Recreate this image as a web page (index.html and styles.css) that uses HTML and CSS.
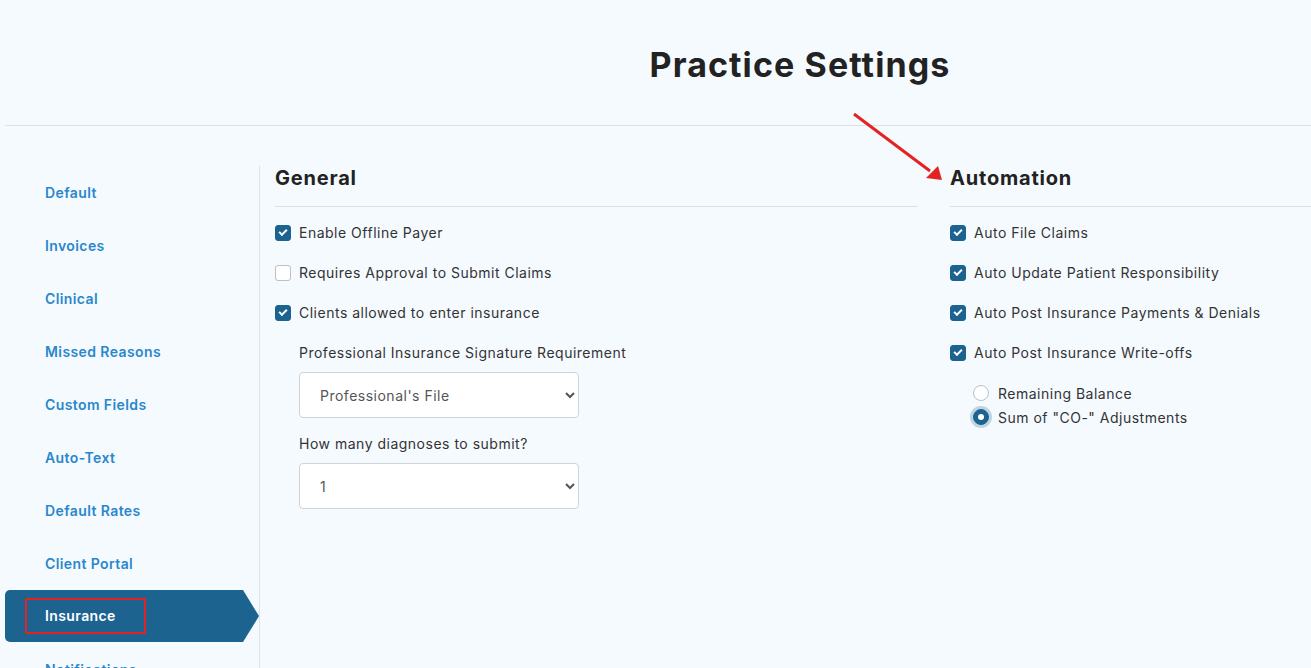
FILE: index.html
```html
<!DOCTYPE html>
<html lang="en">
<head>
  <meta charset="UTF-8">
  <meta name="viewport" content="width=device-width, initial-scale=1.0">
  <title>Practice Settings</title>
  <link rel="stylesheet" href="styles.css">
</head>
<body>
  <header class="page-header">
    <h1>Practice Settings</h1>
  </header>

  <div class="layout">
    <nav class="sidebar">
      <a href="#" class="nav-item">Default</a>
      <a href="#" class="nav-item">Invoices</a>
      <a href="#" class="nav-item">Clinical</a>
      <a href="#" class="nav-item">Missed Reasons</a>
      <a href="#" class="nav-item">Custom Fields</a>
      <a href="#" class="nav-item">Auto-Text</a>
      <a href="#" class="nav-item">Default Rates</a>
      <a href="#" class="nav-item">Client Portal</a>
      <a href="#" class="nav-item active"><span class="highlight">Insurance</span></a>
      <a href="#" class="nav-item">Notifications</a>
    </nav>

    <main class="content">
      <section class="panel">
        <h2>General</h2>
        <div class="options">
          <label class="option"><input type="checkbox" checked><span>Enable Offline Payer</span></label>
          <label class="option"><input type="checkbox"><span>Requires Approval to Submit Claims</span></label>
          <label class="option"><input type="checkbox" checked><span>Clients allowed to enter insurance</span></label>

          <div class="field">
            <label for="signature">Professional Insurance Signature Requirement</label>
            <select id="signature">
              <option>Professional's File</option>
            </select>
          </div>

          <div class="field">
            <label for="diagnoses">How many diagnoses to submit?</label>
            <select id="diagnoses">
              <option>1</option>
              <option>2</option>
              <option>3</option>
              <option>4</option>
            </select>
          </div>
        </div>
      </section>

      <section class="panel">
        <h2>Automation</h2>
        <div class="options">
          <label class="option"><input type="checkbox" checked><span>Auto File Claims</span></label>
          <label class="option"><input type="checkbox" checked><span>Auto Update Patient Responsibility</span></label>
          <label class="option"><input type="checkbox" checked><span>Auto Post Insurance Payments &amp; Denials</span></label>
          <label class="option"><input type="checkbox" checked><span>Auto Post Insurance Write-offs</span></label>

          <div class="radio-group">
            <label class="radio"><input type="radio" name="writeoff"><span>Remaining Balance</span></label>
            <label class="radio"><input type="radio" name="writeoff" checked><span>Sum of "CO-" Adjustments</span></label>
          </div>
        </div>
      </section>
    </main>
  </div>

  <!-- annotation arrow pointing at the Automation heading -->
  <svg class="annotation-arrow" width="100" height="80" viewBox="0 0 100 80">
    <line x1="4" y1="4" x2="80" y2="61" stroke="#e32222" stroke-width="3"/>
    <polygon points="92,70 76,68 88,56" fill="#e32222"/>
  </svg>
</body>
</html>
```

FILE: styles.css
```css
body {
  margin: 0;
  background: #f5faff;
  font-family: Inter, "Liberation Sans", sans-serif;
  color: #333;
  overflow: hidden;
  height: 100vh;
  position: relative;
}

.page-header {
  margin-left: 5px;
  padding: 45px 0 40px 284px;
  border-bottom: 1px solid #dde2e7;
  text-align: center;
}
.page-header h1 {
  margin: 0;
  font-size: 34px;
  line-height: 40px;
  font-weight: 700;
  letter-spacing: 1.1px;
  color: #222;
}

.layout {
  display: flex;
  margin-top: 40px;
  margin-left: 5px;
}

.sidebar {
  width: 254px;
  flex-shrink: 0;
  border-right: 1px solid #dde2e7;
  display: flex;
  flex-direction: column;
  height: 600px;
}
.nav-item {
  display: flex;
  align-items: center;
  height: 53px;
  padding-left: 40px;
  padding-bottom: 1px;
  box-sizing: border-box;
  font-size: 14px;
  font-weight: 600;
  letter-spacing: 0.4px;
  color: #2a87cc;
  text-decoration: none;
  flex-shrink: 0;
}
.nav-item.active {
  position: relative;
  height: 52px;
  margin-bottom: 1px;
  width: 238px;
  padding-left: 20px;
  padding-bottom: 0;
  background: #1d6390;
  color: #fff;
  border-radius: 5px 0 0 5px;
}
.nav-item.active::after {
  content: "";
  position: absolute;
  left: 238px;
  top: 0;
  border-top: 26px solid transparent;
  border-bottom: 26px solid transparent;
  border-left: 16px solid #1d6390;
}
.highlight {
  display: inline-block;
  width: 121px;
  height: 36px;
  box-sizing: border-box;
  border: 2px solid #e02424;
  padding-left: 18px;
  line-height: 32px;
}

.content {
  display: grid;
  grid-template-columns: 643px 643px;
  gap: 32px;
  padding-left: 15px;
}

.panel h2 {
  margin: 0;
  font-size: 20px;
  line-height: 24px;
  font-weight: 700;
  letter-spacing: 0.8px;
  color: #222;
  padding-bottom: 16px;
  border-bottom: 1px solid #dde2e7;
}

.options {
  padding-top: 6px;
  display: flex;
  flex-direction: column;
}

.option {
  display: flex;
  align-items: center;
  gap: 8px;
  height: 40px;
  padding-bottom: 1px;
  box-sizing: border-box;
  font-size: 14px;
  letter-spacing: 0.5px;
}

.option input,
.radio input {
  appearance: none;
  margin: 0;
  width: 16px;
  height: 16px;
  flex-shrink: 0;
  background: #fff;
  border: 1px solid #b9c0c7;
  display: grid;
  place-content: center;
}
.option input {
  border-radius: 3px;
}
.option input:checked {
  background: #1d6390;
  border-color: #1d6390;
}
.option input:checked::before {
  content: "";
  width: 6px;
  height: 3px;
  border-left: 2px solid #fff;
  border-bottom: 2px solid #fff;
  transform: translateY(-1px) rotate(-45deg);
}

.field {
  padding-left: 24px;
  display: flex;
  flex-direction: column;
  margin-top: 10px;
}
.field + .field {
  margin-top: 16px;
}
.field label {
  font-size: 14px;
  line-height: 20px;
  letter-spacing: 0.5px;
  margin-bottom: 9px;
}
.field select {
  width: 280px;
  height: 46px;
  padding-left: 16px;
  font-family: inherit;
  font-size: 14px;
  letter-spacing: 0.5px;
  color: #555;
  background: #fff;
  border: 1px solid #cfd4d9;
  border-radius: 4px;
}

.radio-group {
  padding-left: 23px;
  margin-top: 8px;
  display: flex;
  flex-direction: column;
}
.radio {
  display: flex;
  align-items: center;
  gap: 9px;
  height: 24px;
  font-size: 14px;
  letter-spacing: 0.5px;
}
.radio input {
  border-radius: 50%;
}
.radio input:checked {
  background: #1d6390;
  border-color: #1d6390;
  box-shadow: 0 0 0 3px rgba(29, 99, 144, 0.25);
}
.radio input:checked::before {
  content: "";
  width: 6px;
  height: 6px;
  border-radius: 50%;
  background: #fff;
}

.annotation-arrow {
  position: absolute;
  left: 850px;
  top: 110px;
}
```
